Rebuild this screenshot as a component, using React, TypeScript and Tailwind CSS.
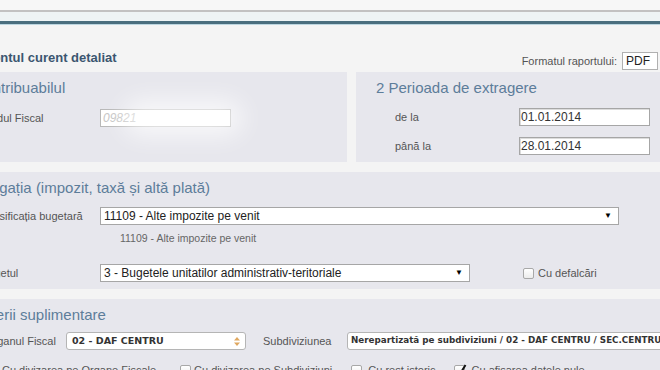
const sans = "font-['Liberation_Sans',Arial,sans-serif]";
const dejavu = "font-['DejaVu_Sans','Liberation_Sans',sans-serif]";

function Arrow() {
  return <span className="text-[8px] leading-none text-black">▼</span>;
}

function UpDown() {
  return (
    <svg width="6" height="9" viewBox="0 0 6 9">
      <path d="M3 0 L6 3.5 L0 3.5 Z" fill="#e0a860" />
      <path d="M3 9 L6 5.5 L0 5.5 Z" fill="#e0a860" />
    </svg>
  );
}

function Checkbox({ checked = false }: { checked?: boolean }) {
  return (
    <span className="relative inline-block h-[11px] w-[11px] shrink-0 rounded-[2px] border border-[#a8a8a8] bg-gradient-to-b from-white to-[#ececec]">
      {checked && (
        <svg className="absolute -top-[2px] left-[1px]" width="11" height="12" viewBox="0 0 11 12">
          <path d="M1.5 7 L4 10 L9.5 1" stroke="#111" strokeWidth="2" fill="none" />
        </svg>
      )}
    </span>
  );
}

function DateInput({ value }: { value: string }) {
  return (
    <div className="flex h-[18px] w-[131px] shrink-0 items-center border border-[#a6a6a6] bg-white pl-[1px] text-[12px] text-[#333] shadow-[inset_1px_1px_0_#dcdcdc]">
      {value}
    </div>
  );
}

export default function App() {
  return (
    <div className={`h-[370px] w-[660px] overflow-hidden bg-[#f4f4f4] ${sans}`}>
      {/* top bar */}
      <div className="h-[10px] bg-[#f7f7f7]" />
      <div className="h-[2px] bg-[#c2c2c2]" />
      <div className="h-[9px] bg-[#eef4f5]" />
      <div className="h-[3px] bg-[#4a6e7e]" />
      <div className="h-[1px] bg-[#bcd6e0]" />

      <div className="-ml-[57px] w-[717px]">
        {/* title row */}
        <div className="mt-[25px] flex h-[20px] justify-between">
          <div className="self-start pl-[40px] text-[13px] font-bold leading-[16px] text-[#3b5670]">
            Contul curent detaliat
          </div>
          <div className="flex items-center gap-[5px] self-end pr-[2px]">
            <span className="text-[11px] text-[#555]">Formatul raportului:</span>
            <div className="flex h-[18px] w-[36px] items-center border border-[#b0b0b0] bg-white pl-[3px] text-[12px] text-[#222]">
              PDF
            </div>
          </div>
        </div>

        {/* panel 1 */}
        <div className="mt-[2px] flex h-[90px] gap-[9px]">
          <div className="relative w-[404px] shrink-0 bg-[#e7e7ed] pt-[7px]">
            <div className="pl-[18px] text-[15px] leading-[18px] text-[#5d7d9a]">1 Contribuabilul</div>
            <div className="mt-[12px] flex items-center pl-[40px]">
              <span className="w-[117px] shrink-0 text-[11px] text-[#555]">Codul Fiscal</span>
              <div className="flex h-[18px] w-[131px] shrink-0 items-center border border-[#b8b8b8] bg-white pl-[2px] text-[12px] italic text-[#c4c4c4]">
                09821
              </div>
            </div>
            <div className="absolute left-[180px] top-[28px] h-[36px] w-[120px] rounded-full bg-white/70 blur-md" />
          </div>
          <div className="flex-1 bg-[#e7e7ed] pt-[7px]">
            <div className="pl-[20px] text-[15px] leading-[18px] text-[#5d7d9a]">2 Perioada de extragere</div>
            <div className="mt-[11px] flex items-center pl-[39px]">
              <span className="w-[124px] shrink-0 text-[11px] text-[#555]">de la</span>
              <DateInput value="01.01.2014" />
            </div>
            <div className="mt-[11px] flex items-center pl-[39px]">
              <span className="w-[124px] shrink-0 text-[11px] text-[#555]">până la</span>
              <DateInput value="28.01.2014" />
            </div>
          </div>
        </div>

        {/* panel 2 */}
        <div className="mt-[10px] h-[117px] bg-[#e7e7ed] pt-[7px]">
          <div className="pl-[17px] text-[15px] leading-[18px] text-[#5d7d9a]">
            3 Obligația (impozit, taxă și altă plată)
          </div>
          <div className="mt-[10px] flex items-center pl-[40px]">
            <span className="w-[117px] shrink-0 text-[11px] text-[#555]">Clasificația bugetară</span>
            <div className="flex h-[18px] w-[519px] shrink-0 items-center justify-between border border-[#a6a6a6] bg-white pl-[3px] pr-[6px] text-[12px] text-[#222]">
              <span>11109 - Alte impozite pe venit</span>
              <Arrow />
            </div>
          </div>
          <div className="mt-[6px] pl-[177px] text-[10.5px] leading-[14px] text-[#666]">
            11109 - Alte impozite pe venit
          </div>
          <div className="mt-[19px] flex items-center pl-[38px]">
            <span className="w-[119px] shrink-0 text-[11px] text-[#555]">Bugetul</span>
            <div className="flex h-[18px] w-[370px] shrink-0 items-center justify-between border border-[#a6a6a6] bg-white pl-[3px] pr-[6px] text-[12px] text-[#222]">
              <span>3 - Bugetele unitatilor administrativ-teritoriale</span>
              <Arrow />
            </div>
            <div className="ml-[53px] flex items-center gap-[4px] text-[11px] text-[#555]">
              <Checkbox />
              <span>Cu defalcări</span>
            </div>
          </div>
        </div>

        {/* panel 3 */}
        <div className="mt-[10px] h-[80px] bg-[#e7e7ed] pt-[7px]">
          <div className="pl-[17px] text-[15px] leading-[18px] text-[#5d7d9a]">4 Criterii suplimentare</div>
          <div className="mt-[8px] flex items-center pl-[42px]">
            <span className="w-[81px] shrink-0 text-[11px] text-[#555]">Organul Fiscal</span>
            <div className={`flex h-[18px] w-[180px] shrink-0 items-center justify-between rounded-[3px] border border-[#b5b5b5] bg-white pl-[5px] pr-[5px] text-[9.5px] font-bold text-[#333] ${dejavu}`}>
              <span>02 - DAF CENTRU</span>
              <UpDown />
            </div>
            <span className="ml-[17px] w-[84px] shrink-0 text-[11px] text-[#555]">Subdiviziunea</span>
            <div className={`flex h-[18px] w-[330px] shrink-0 items-center rounded-[3px] border border-[#b5b5b5] bg-white pl-[3px] text-[8.75px] font-bold text-[#333] ${dejavu}`}>
              Nerepartizată pe subdiviziuni / 02 - DAF CENTRU / SEC.CENTRU
            </div>
          </div>
          <div className="mt-[12px] flex items-center pl-[43px] text-[11px] text-[#555]">
            <Checkbox />
            <span className="ml-[5px]">Cu divizarea pe Organe Fiscale</span>
            <span className="ml-[24px] flex"><Checkbox /></span>
            <span className="ml-[3px]">Cu divizarea pe Subdiviziuni</span>
            <span className="ml-[19px] flex"><Checkbox /></span>
            <span className="ml-[6px]">Cu rest istoric</span>
            <span className="ml-[18px] flex"><Checkbox checked /></span>
            <span className="ml-[7px]">Cu afisarea datele nule</span>
          </div>
        </div>
      </div>
    </div>
  );
}
